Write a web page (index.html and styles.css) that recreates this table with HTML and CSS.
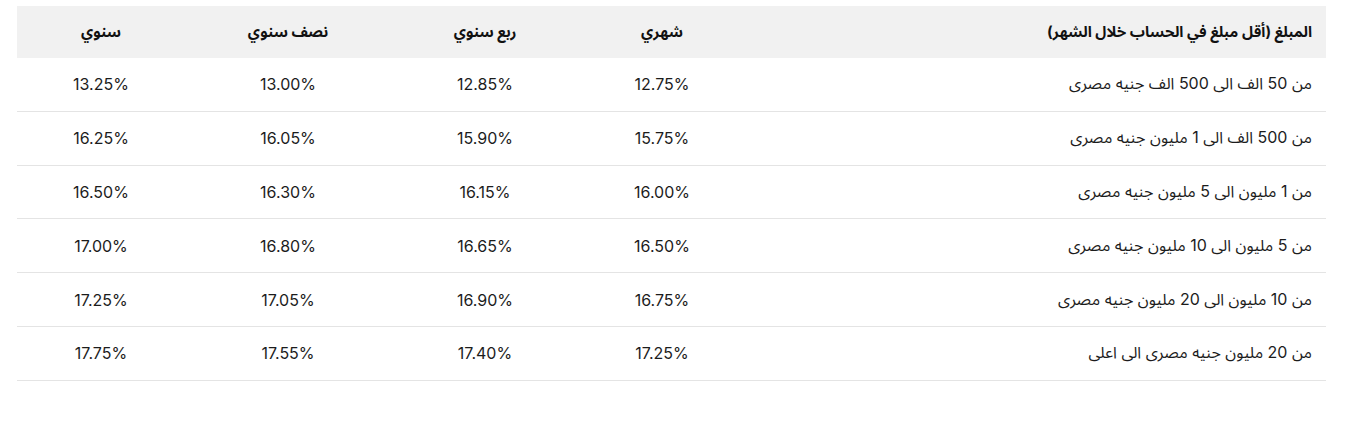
FILE: index.html
```html
<!DOCTYPE html>
<html lang="ar" dir="rtl">
<head>
<meta charset="utf-8">
<link rel="stylesheet" href="styles.css">
</head>
<body>
<div class="wrap">
<table class="rates">
  <colgroup>
    <col class="c1"><col class="c2"><col class="c3"><col class="c4"><col class="c5">
  </colgroup>
  <thead>
    <tr>
      <th class="first">المبلغ (أقل مبلغ في الحساب خلال الشهر)</th>
      <th>شهري</th>
      <th>ربع سنوي</th>
      <th>نصف سنوي</th>
      <th>سنوي</th>
    </tr>
  </thead>
  <tbody>
    <tr><td class="first">من 50 الف الى 500 الف جنيه مصرى</td><td>12.75%</td><td>12.85%</td><td>13.00%</td><td>13.25%</td></tr>
    <tr><td class="first">من 500 الف الى 1 مليون جنيه مصرى</td><td>15.75%</td><td>15.90%</td><td>16.05%</td><td>16.25%</td></tr>
    <tr><td class="first">من 1 مليون الى 5 مليون جنيه مصرى</td><td>16.00%</td><td>16.15%</td><td>16.30%</td><td>16.50%</td></tr>
    <tr><td class="first">من 5 مليون الى 10 مليون جنيه مصرى</td><td>16.50%</td><td>16.65%</td><td>16.80%</td><td>17.00%</td></tr>
    <tr><td class="first">من 10 مليون الى 20 مليون جنيه مصرى</td><td>16.75%</td><td>16.90%</td><td>17.05%</td><td>17.25%</td></tr>
    <tr><td class="first">من 20 مليون جنيه مصرى الى اعلى</td><td>17.25%</td><td>17.40%</td><td>17.55%</td><td>17.75%</td></tr>
  </tbody>
</table>
</div>
</body>
</html>
```
FILE: styles.css
```css
html, body {
  margin: 0;
  padding: 0;
  background: #ffffff;
}
body {
  font-family: "Inter", "Noto Sans Arabic", "Noto Sans", "DejaVu Sans", sans-serif;
  color: #1c1c1c;
}
.wrap {
  padding: 6px 19px 0 17px;
}
.rates {
  width: 1309px;
  border-collapse: collapse;
  table-layout: fixed;
}
.c1 { width: 581px; }
.c2 { width: 166px; }
.c3 { width: 188px; }
.c4 { width: 206px; }
.c5 { width: 168px; }
.rates th {
  background: #f1f1f1;
  height: 52px;
  padding: 0;
  font-size: 15px;
  font-weight: bold;
  text-align: center;
  color: #111;
}
.rates td {
  height: 52.8px;
  padding: 0;
  font-size: 16px;
  text-align: center;
  border-bottom: 1px solid #e4e4e4;
}
.rates .first {
  text-align: right;
  padding-right: 14px;
}
```
